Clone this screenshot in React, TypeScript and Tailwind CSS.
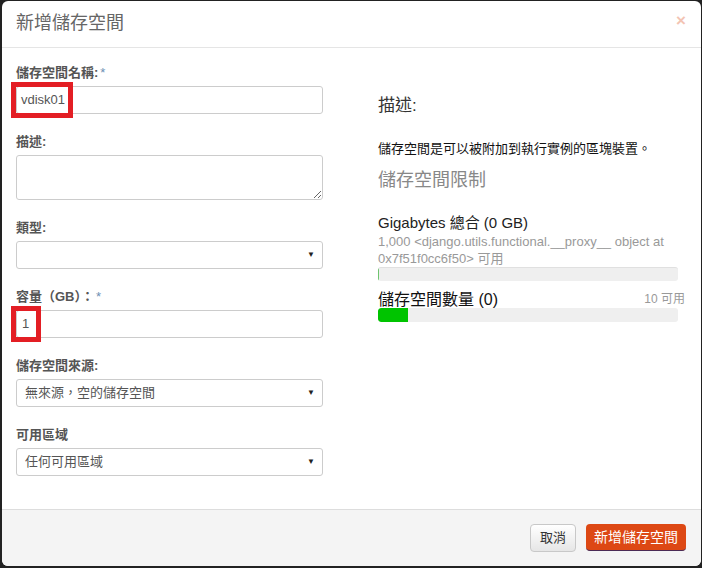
import React from 'react'

const cjk = '"Liberation Sans", "Noto Sans CJK TC", sans-serif'

function Label({ text, required }: { text: string; required?: boolean }) {
  return (
    <div className="h-[18px] leading-[18px] text-[13px] font-bold text-[#555] mb-[4px]">
      {text}
      {required && <span className="text-[#6c8fb4] font-normal ml-[2px]">*</span>}
    </div>
  )
}

function SelectBox({ value }: { value: string }) {
  return (
    <div className="h-[28px] border border-[#ccc] rounded-[3px] bg-white flex items-center justify-between pl-[8px] pr-[7px] text-[13px] text-[#555]">
      <span>{value}</span>
      <span className="text-[8px] text-[#222]">▼</span>
    </div>
  )
}

function Annot({ w }: { w: number }) {
  return (
    <div
      className="absolute left-[-5px] top-[-4px] h-[36px] border-[5px] border-[#e31e24] pointer-events-none"
      style={{ width: w }}
    />
  )
}

export default function App() {
  return (
    <div className="w-[702px] h-[568px] bg-[#222] pt-px pl-[2px] pr-px pb-[2px]" style={{ fontFamily: cjk }}>
      <div className="w-full h-full bg-white rounded-[6px] flex flex-col overflow-hidden">
        <div className="h-[47px] border-b border-[#e5e5e5] flex items-center justify-between pl-[14px] pr-[15px] shrink-0">
          <h1 className="text-[18px] text-[#666] font-normal leading-none mt-[-2px]">新增儲存空間</h1>
          <span className="text-[17px] font-bold text-[#f3c4b3] mt-[-6px]">×</span>
        </div>

        <div className="flex-1 flex pl-[14px]">
          <div className="w-[307px] pt-[16px]">
            <Label text="儲存空間名稱:" required />
            <div className="relative">
              <div className="h-[28px] border border-[#ccc] rounded-[3px] flex items-center pl-[4px] text-[13px] text-[#555]">vdisk01</div>
              <Annot w={62} />
            </div>

            <div className="mt-[19px]">
              <Label text="描述:" />
              <textarea className="block w-full h-[45px] border border-[#ccc] rounded-[3px] bg-white" readOnly />
            </div>

            <div className="mt-[19px]">
              <Label text="類型:" />
              <SelectBox value="" />
            </div>

            <div className="mt-[19px]">
              <Label text="容量（GB）：" required />
              <div className="relative">
                <div className="h-[28px] border border-[#ccc] rounded-[3px] flex items-center pl-[5px] text-[13px] text-[#555]">1</div>
                <Annot w={30} />
              </div>
            </div>

            <div className="mt-[19px]">
              <Label text="儲存空間來源:" />
              <SelectBox value="無來源，空的儲存空間" />
            </div>

            <div className="mt-[19px]">
              <Label text="可用區域" />
              <SelectBox value="任何可用區域" />
            </div>
          </div>

          <div className="w-[307px] ml-[55px] pt-[47px]">
            <h3 className="text-[17px] leading-[22px] text-[#333]">描述:</h3>
            <p className="mt-[23px] text-[13px] leading-[17px] text-[#111]">儲存空間是可以被附加到執行實例的區塊裝置。</p>
            <h3 className="mt-[12px] text-[18px] leading-[22px] text-[#888]">儲存空間限制</h3>

            <div className="mt-[23px] text-[15px] leading-[18px] text-[#222]">Gigabytes 總合 (0 GB)</div>
            <div className="mt-[1px] w-[300px] text-[13px] leading-[17px] text-[#999]">
              1,000 &lt;django.utils.functional.__proxy__ object at 0x7f51f0cc6f50&gt; 可用
            </div>
            <div className="w-[300px] h-[14px] bg-[#efefef] rounded-[3px] border-t border-[#e0e0e0] overflow-hidden">
              <div className="h-full w-px bg-[#6fc46f]" />
            </div>

            <div className="mt-[7px] h-[20px] flex items-end justify-between">
              <span className="text-[16px] leading-[20px] text-[#111] translate-y-[2px]">儲存空間數量 (0)</span>
              <span className="text-[12px] leading-[18px] text-[#999]">10 可用</span>
            </div>
            <div className="w-[300px] h-[14px] bg-[#efefef] rounded-[3px] overflow-hidden relative">
              <div className="h-full w-[30px] bg-[#00c400] rounded-l-[3px]" />
            </div>
          </div>
        </div>

        <div className="h-[57px] shrink-0 border-t border-[#ddd] bg-[#f4f4f4] flex items-start justify-end pt-[14px] pr-[15px] gap-[10px]">
          <button className="h-[28px] px-[9px] rounded-[4px] border border-[#c8c8c8] bg-gradient-to-b from-white to-[#e6e6e6] text-[13px] text-[#333]">取消</button>
          <button className="h-[27px] px-[8px] rounded-[4px] bg-[#dd4814] border-b border-[#4b2b55] text-[14px] text-white">新增儲存空間</button>
        </div>
      </div>
    </div>
  )
}
